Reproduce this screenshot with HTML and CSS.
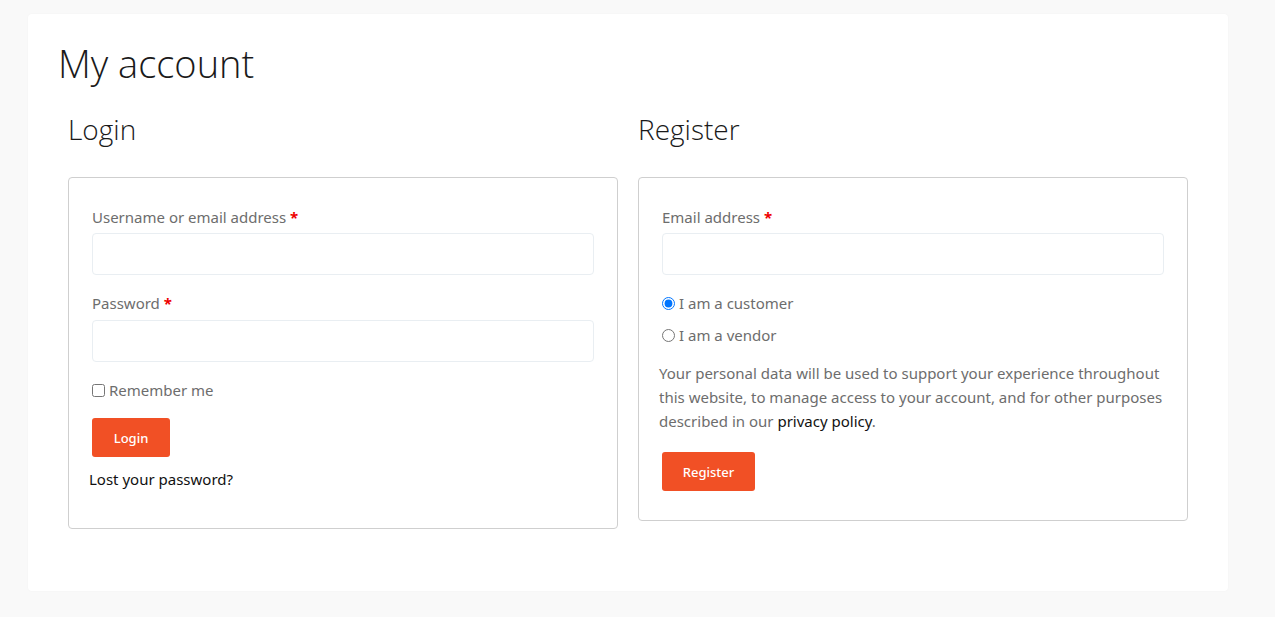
FILE: index.html
```html
<!DOCTYPE html>
<html lang="en">
<head>
<meta charset="utf-8">
<title>My account</title>
<link rel="stylesheet" href="styles.css">
</head>
<body>
<main class="page">
  <h1 class="page-title">My account</h1>
  <div class="cols">
    <section class="col">
      <h2 class="col-title">Login</h2>
      <form class="box box-login">
        <p class="form-row">
          <label class="field-label">Username or email address <span class="req">*</span></label>
          <input class="text-input" type="text">
        </p>
        <p class="form-row">
          <label class="field-label field-label-tall">Password <span class="req">*</span></label>
          <input class="text-input" type="password">
        </p>
        <p class="form-row check-row">
          <label class="inline-label"><input type="checkbox" class="check"> Remember me</label>
        </p>
        <p class="form-row btn-row">
          <button type="button" class="btn btn-login">Login</button>
        </p>
        <p class="lost"><a href="#" class="dark-link">Lost your password?</a></p>
      </form>
    </section>
    <section class="col">
      <h2 class="col-title">Register</h2>
      <form class="box box-register">
        <p class="form-row">
          <label class="field-label">Email address <span class="req">*</span></label>
          <input class="text-input" type="email">
        </p>
        <p class="form-row radio-row first-radio">
          <label class="inline-label"><input type="radio" name="role" class="radio" checked> I am a customer</label>
        </p>
        <p class="form-row radio-row">
          <label class="inline-label"><input type="radio" name="role" class="radio"> I am a vendor</label>
        </p>
        <p class="privacy">Your personal data will be used to support your experience throughout this website, to manage access to your account, and for other purposes described in our <a href="#" class="dark-link">privacy&nbsp;policy</a>.</p>
        <p class="form-row btn-row">
          <button type="button" class="btn btn-register">Register</button>
        </p>
      </form>
    </section>
  </div>
</main>
</body>
</html>
```
FILE: styles.css
```css
* { box-sizing: border-box; }
html, body { margin: 0; padding: 0; }
body {
  background: #f9f9f9;
  font-family: "Noto Sans", "Open Sans", sans-serif;
  color: #6d6d6d;
  font-size: 15px;
  padding: 14px 47px 26px 28px;
}
.page {
  width: 1200px;
  background: #fff;
  border-radius: 4px;
  box-shadow: 0 0 2px rgba(0,0,0,0.04);
  padding: 22px 30px 62px 30px;
}
.page-title {
  margin: 0 0 19px 0;
  font-family: "Open Sans", sans-serif;
  font-weight: 300;
  font-size: 38px;
  line-height: 54px;
  color: #1a1a1a;
}
.cols {
  display: flex;
  gap: 20px;
  padding: 0 10px;
  align-items: flex-start;
}
.col { flex: 1 1 0; }
.col-title {
  margin: 0 0 28px 0;
  font-family: "Open Sans", sans-serif;
  font-weight: 300;
  font-size: 28px;
  line-height: 40px;
  color: #1a1a1a;
}
.box {
  border: 1px solid #cfcfcf;
  border-radius: 4px;
  padding: 20px;
}
.form-row { margin: 0 0 6px 0; padding: 3px; }
.field-label {
  display: block;
  line-height: 32px;
}
.field-label-tall { line-height: 33px; }
.req { color: #e00; font-weight: 700; }
.text-input {
  display: block;
  width: 100%;
  height: 42px;
  border: 1px solid #e9eef2;
  border-radius: 4px;
  background: #fff;
  font: inherit;
}
.inline-label {
  display: flex;
  align-items: center;
  line-height: 25px;
}
.check-row .inline-label { line-height: 32px; }
.check { margin: 0 4px 0 0; width: 13px; height: 13px; }
.radio { margin: 0 4px 0 0; width: 13px; height: 13px; }
.radio-row { margin: 0 0 1px 0; }
.first-radio { margin-top: 10px; }
.btn-row { margin: 0 0 6px 0; }
.box-register .btn-row { margin-top: 8px; }
.btn {
  display: block;
  height: 39px;
  border: 0;
  border-radius: 3px;
  background: #f15025;
  color: #fff;
  font-family: "Noto Sans", sans-serif;
  font-weight: 500;
  font-size: 13px;
  cursor: pointer;
}
.btn-login { width: 78px; }
.btn-register { width: 93px; }
.lost { margin: 0 0 16px 0; line-height: 26px; }
.dark-link { color: #111; text-decoration: none; }
.privacy {
  margin: 10px 0 16px 0;
  line-height: 24px;
}
```
